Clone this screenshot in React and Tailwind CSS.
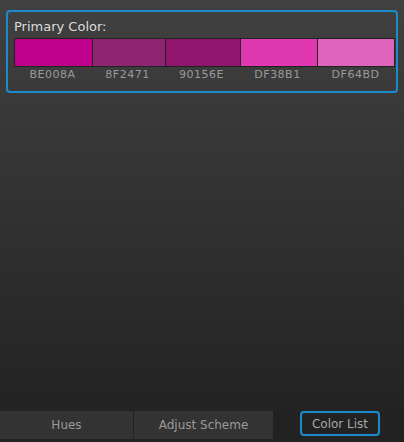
import React from "react";

const swatches = [
  { hex: "BE008A", w: "w-[77px]" },
  { hex: "8F2471", w: "w-[73px]" },
  { hex: "90156E", w: "w-[75px]" },
  { hex: "DF38B1", w: "w-[77px]" },
  { hex: "DF64BD", w: "flex-1" },
];

const bgs = {
  BE008A: "bg-[#be008a]",
  "8F2471": "bg-[#8f2471]",
  "90156E": "bg-[#90156e]",
  DF38B1: "bg-[#df38b1]",
  DF64BD: "bg-[#df64bd]",
};

export default function App() {
  return (
    <div className="w-[404px] h-[442px] flex flex-col bg-[#222] font-['Tahoma','DejaVu_Sans',sans-serif]">
      {/* Panel */}
      <div className="flex-1 bg-gradient-to-b from-[#414141] to-[#232323] pt-[10px] px-[6px]">
        <div className="h-[83px] border-2 border-[#1a8bcb] rounded-[4px] pt-[6px] px-[6px]">
          <div className="text-[13px] leading-[18px] text-[#dcdcdc]">Primary Color:</div>
          <div className="mt-[2px] flex border border-[#222] w-[381px]">
            {swatches.map((s, i) => (
              <div
                key={s.hex}
                className={`${s.w} h-[27px] ${bgs[s.hex]} ${i > 0 ? "border-l border-[#222]" : ""}`}
              />
            ))}
          </div>
          <div className="flex w-[381px] mt-[1px]">
            {swatches.map((s) => (
              <div key={s.hex} className={`${s.w} text-center text-[11px] leading-[14px] tracking-[0.5px] text-[#9a9a9a]`}>
                {s.hex}
              </div>
            ))}
          </div>
        </div>
      </div>

      {/* Tabs */}
      <div className="h-[31px] flex text-[12px] text-[#9a9a9a]">
        <div className="w-[134px] h-[28px] bg-[#333] flex items-center justify-center border-r border-[#222]">Hues</div>
        <div className="w-[139px] h-[28px] bg-[#333] flex items-center justify-center">Adjust Scheme</div>
        <div className="flex-1 flex items-start justify-center">
          <div className="ml-[3px] w-[80px] h-[25px] border-2 border-[#1a8bcb] rounded-[4px] flex items-center justify-center text-[#a8a8a8]">
            Color List
          </div>
        </div>
      </div>
    </div>
  );
}
